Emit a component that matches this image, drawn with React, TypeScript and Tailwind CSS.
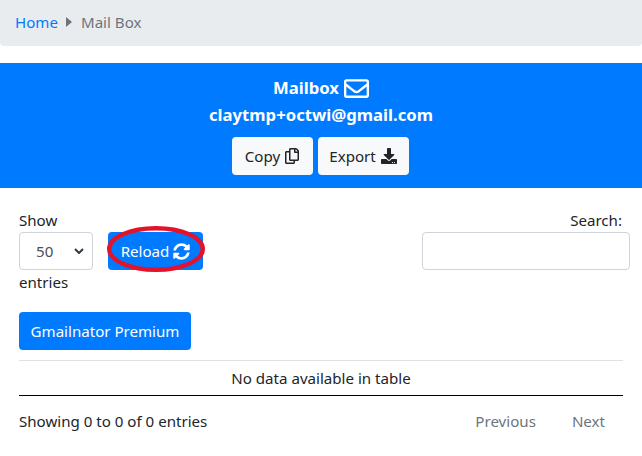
import { FaRegEnvelope, FaRegCopy, FaDownload, FaSyncAlt } from 'react-icons/fa';

export default function App() {
    return (
        <div className="w-[642px] h-[456px] overflow-hidden bg-white text-[15.1px] leading-[24px] text-[#212529] font-['Noto_Sans',sans-serif]">
            {/* Breadcrumb */}
            <div className="h-[46px] bg-[#e9ecef] rounded-b-[4px] px-[15px] pt-[10px] flex items-start">
                <a className="text-[#007bff]">Home</a>
                <svg viewBox="0 0 6 10" className="w-[6px] h-[10px] ml-[8px] mr-[9px] mt-[7px]" fill="#6c757d">
                    <path d="M0 0l6 5-6 5z" />
                </svg>
                <span className="text-[#6c757d]">Mail Box</span>
            </div>

            {/* Mailbox header */}
            <div className="mt-[17px] h-[125px] bg-[#007bff] text-white text-[16.7px] font-bold flex flex-col items-center pt-[12px]">
                <div className="flex items-center gap-[5px] h-[26px]">
                    Mailbox <FaRegEnvelope className="w-[25px] h-[25px]" />
                </div>
                <div className="h-[26px] mt-[1px] flex items-center">claytmp+octwi@gmail.com</div>
                <div className="flex gap-[5px] mt-[9px] mr-[2px] text-[15.1px] font-normal text-[#212529]">
                    <button className="h-[38px] w-[81px] rounded-[4px] bg-[#f8f9fa] flex items-center justify-center gap-[5px]">
                        Copy <FaRegCopy className="w-[14px] h-[16px]" />
                    </button>
                    <button className="h-[38px] w-[91px] rounded-[4px] bg-[#f8f9fa] flex items-center justify-center gap-[5px]">
                        Export <FaDownload className="w-[16px] h-[16px]" />
                    </button>
                </div>
            </div>

            {/* Table controls */}
            <div className="px-[19px] pt-[20px] flex justify-between">
                <div>
                    <div className="h-[24px]">Show</div>
                    <div className="flex items-center">
                        <div className="relative w-[74px] h-[38px] border border-[#ced4da] rounded-[4px] flex items-center pl-[16px] text-[#495057]">
                            50
                            <svg viewBox="0 0 10 6" className="absolute right-[8px] top-[15px] w-[10px] h-[6px]" fill="none" stroke="#343a40" strokeWidth="2">
                                <path d="M1 1l4 4 4-4" />
                            </svg>
                        </div>
                        <div className="relative ml-[15px]">
                            <button className="h-[38px] w-[95px] rounded-[4px] bg-[#007bff] text-white flex items-center justify-center gap-[4px]">
                                Reload <FaSyncAlt className="w-[17px] h-[17px]" />
                            </button>
                            <svg viewBox="0 0 98 46" className="absolute left-[-1px] top-[-6px] w-[98px] h-[46px] pointer-events-none" fill="none">
                                <ellipse cx="49" cy="23" rx="46.8" ry="20.8" stroke="#e2132b" strokeWidth="4.4" />
                            </svg>
                        </div>
                    </div>
                    <div className="h-[24px]">entries</div>
                </div>
                <div className="flex flex-col items-end mr-[-7px]">
                    <div className="h-[24px] mr-[8px]">Search:</div>
                    <input className="w-[208px] h-[38px] border border-[#ced4da] rounded-[4px]" />
                </div>
            </div>

            <div className="px-[19px]">
                <button className="mt-[18px] h-[38px] w-[172px] rounded-[4px] bg-[#007bff] text-white">Gmailnator Premium</button>

                {/* Empty table */}
                <div className="mt-[10px] border-t border-[#dee2e6]">
                    <div className="h-[35px] border-b border-black flex items-center justify-center">No data available in table</div>
                </div>

                {/* Footer */}
                <div className="flex justify-between items-center mt-[13px]">
                    <span>Showing 0 to 0 of 0 entries</span>
                    <div className="flex text-[#6c757d] mr-[18px] gap-[36px]">
                        <span>Previous</span>
                        <span>Next</span>
                    </div>
                </div>
            </div>
        </div>
    );
}
